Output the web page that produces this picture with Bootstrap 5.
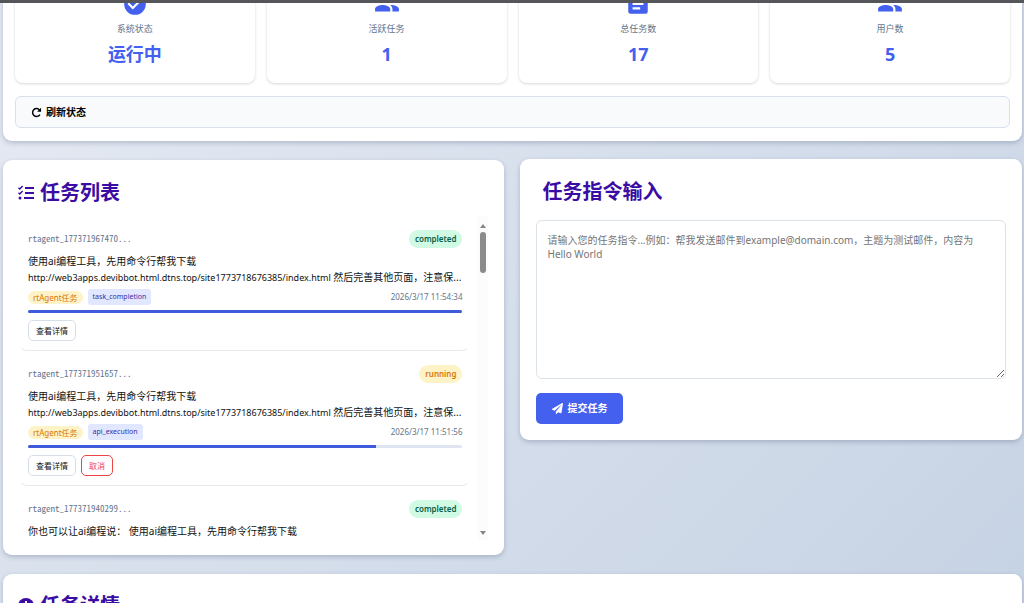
<!DOCTYPE html>
<html lang="zh-CN">
<head>
<meta charset="utf-8">
<meta name="viewport" content="width=device-width, initial-scale=1">
<title>任务控制台</title>
<link href="https://cdn.jsdelivr.net/npm/bootstrap@5.3.0/dist/css/bootstrap.min.css" rel="stylesheet">
<style>
:root{--primary:#4361ee;--heading:#3a0ca3;--muted:#64748b}
body{font-family:"Noto Sans","Noto Sans CJK SC",sans-serif;font-size:10px;line-height:16px;color:#111;height:100vh;overflow:hidden;background:linear-gradient(135deg,#e6eaf3,#c6d3e4)}
.window-edge{height:3px;background:#555659;z-index:5}
.page-body{padding:0 2px 0 3px}
.panel{background:#fff;border-radius:9px;box-shadow:0 2px 5px rgba(60,75,110,.28)}
.status-panel{margin-top:-36px;padding:12px 12px 13px;margin-bottom:19px}
.stat-row{gap:12px}
.stat-box{border-radius:8px;box-shadow:0 1px 3px rgba(0,0,0,.16);padding:12px 12px 16px}
.stat-box svg{width:26px;height:26px;fill:var(--primary)}
.stat-name{font-size:9px;line-height:14px;color:var(--muted);margin-top:5px}
.stat-num{font-size:18px;line-height:24px;font-weight:700;color:var(--primary);margin:6px 0 1px}
.btn{--bs-btn-border-radius:5px}
.btn-refresh{--bs-btn-border-radius:6px;background:#f8fafc;border:1px solid #d8e0ea;font-size:10px;line-height:16px;font-weight:700;padding:7px 15px;margin-top:13px;color:#000}
h2{font-size:20px;line-height:28px;font-weight:700;color:var(--heading);margin:0}
.heading-row{gap:6px}
.task-panel{padding:19px 16px 15px 15px;min-width:0}
.input-panel{min-width:0}
.task-scroller{height:324px;overflow:hidden;padding:0 8px 0 1px;min-width:0}
.task-lists{margin-top:9px}
.task-row{height:135px;padding:14px 7px 9px 8px;border:1px solid transparent;border-bottom-color:#e8e9ec;border-radius:8px;border-top:0}
.task-id{font-family:"Noto Sans Mono CJK SC","Liberation Mono",monospace;font-size:9px;color:var(--muted)}
.state{font-size:8px;line-height:14px;font-weight:600;padding:2px 6px;border-radius:9px}
.state-done{background:#d1fae5;color:#065f46}
.state-run{background:#fef3c7;color:#d97706}
.task-text{margin:5px 0 4px;height:32px;white-space:nowrap}
.task-url{font-size:9px}
.tag-agent,.tag-kind{padding:0 5px}
.tag-agent{font-size:8px;line-height:13px;border-radius:7px;background:#fef3c7;color:#d97706}
.tag-kind{font-size:7px;line-height:16px;border-radius:3px;background:#e0e7ff;color:#3730a3}
.tag-group,.btn-set{gap:5px}
.task-time{font-size:8px;color:var(--muted)}
.progress{height:3px;border-radius:2px;background:#dfe6f2;margin:5px 0 7px}
.progress-bar{background:#3f5bdc}
.btn-row{font-size:8px;line-height:15px;padding:2px 7px;background:#fff;border:1px solid #d8dee8;color:#111}
.btn-cancel{border-color:#ef4444;color:#ef4444}
.scroll-rail{width:10px;background:#fcfcfc;padding:8px 0 5px;height:324px}
.scroll-thumb{width:6px;height:41px;border-radius:3px;background:#8b8b8b;margin-top:4px}
.input-panel{padding:19px 16px 16px;margin-top:-1px}
.input-panel h2{padding-left:6px}
.cmd-box{height:159px;font-size:10px;line-height:14px;padding:12px 10px;margin-top:14px;border:1px solid #dbe2e8;border-radius:6px;resize:vertical}
.cmd-box::placeholder{color:#757575;opacity:1}
.btn-submit{background:var(--primary);color:#fff;font-size:10px;line-height:17px;font-weight:700;padding:6px 15px;margin-top:14px}
.detail-panel{margin-top:19px;padding:18px 15px}
</style>
</head>
<body>
<div class="window-edge position-relative"></div>
<main class="page-body">
  <section class="panel status-panel">
    <div class="d-flex stat-row">
      <div class="stat-box flex-fill w-100 text-center">
        <svg class="d-block mx-auto" viewBox="0 0 24 24"><path d="M12 2a10 10 0 1 0 0 20 10 10 0 0 0 0-20zm-2 15-5-5 1.400-1.400 3.600 3.600 7.600-7.600L19 8z"/></svg>
        <div class="stat-name">系统状态</div><div class="stat-num">运行中</div>
      </div>
      <div class="stat-box flex-fill w-100 text-center">
        <svg class="d-block mx-auto" viewBox="0 0 24 24"><path d="M16 11a3 3 0 1 0 0-6 3 3 0 0 0 0 6zm-8 0a3 3 0 1 0 0-6 3 3 0 0 0 0 6zm0 2c-2.300 0-7 1.200-7 3.500V19h14v-2.500C15 14.200 10.300 13 8 13zm8 0-1 .1c1.200.8 2 2 2 3.400V19h6v-2.500c0-2.300-4.700-3.500-7-3.500z"/></svg>
        <div class="stat-name">活跃任务</div><div class="stat-num">1</div>
      </div>
      <div class="stat-box flex-fill w-100 text-center">
        <svg class="d-block mx-auto" viewBox="0 0 24 24"><path d="M19 3H5a2 2 0 0 0-2 2v14c0 1.100.9 2 2 2h14a2 2 0 0 0 2-2V5a2 2 0 0 0-2-2zm-5 14H7v-2h7zm3-4H7v-2h10zm0-4H7V7h10z"/></svg>
        <div class="stat-name">总任务数</div><div class="stat-num">17</div>
      </div>
      <div class="stat-box flex-fill w-100 text-center">
        <svg class="d-block mx-auto" viewBox="0 0 24 24"><path d="M16 11a3 3 0 1 0 0-6 3 3 0 0 0 0 6zm-8 0a3 3 0 1 0 0-6 3 3 0 0 0 0 6zm0 2c-2.300 0-7 1.200-7 3.500V19h14v-2.500C15 14.200 10.300 13 8 13zm8 0-1 .1c1.200.8 2 2 2 3.400V19h6v-2.500c0-2.300-4.700-3.500-7-3.500z"/></svg>
        <div class="stat-name">用户数</div><div class="stat-num">5</div>
      </div>
    </div>
    <button type="button" class="btn btn-refresh w-100 d-flex align-items-center gap-1">
      <svg width="11" height="11" viewBox="0 0 12 12" fill="none" stroke="#000" stroke-width="1.600"><path d="M9.700 8.300A4.300 4.300 0 1 1 9.300 3.200"/><path d="M11 .8v4.400H6.600z" fill="#000" stroke="none"/></svg>
      <span>刷新状态</span>
    </button>
  </section>

  <div class="d-flex align-items-start gap-3">
    <section class="panel task-panel w-50">
      <h2 class="d-flex align-items-center heading-row">
        <svg width="16" height="16" viewBox="0 0 16 16" fill="none" stroke="#3a0ca3" stroke-width="1.800"><path d="M7 3h9M7 8h9M6 13h10"/><path d="M.5 2.700 1.800 4 4.600 1M.5 7.700 1.800 9l2.800-3" stroke-width="1.400"/><circle cx="2" cy="13" r="1.500" fill="#3a0ca3" stroke="none"/></svg>
        <span>任务列表</span>
      </h2>
      <div class="d-flex task-lists">
        <div class="task-scroller flex-grow-1">
          <article class="task-row">
            <div class="d-flex justify-content-between align-items-center"><span class="task-id">rtagent_177371967470...</span><span class="state state-done">completed</span></div>
            <p class="task-text">使用ai编程工具，先用命令行帮我下载<br><span class="task-url">http://web3apps.devibbot.html.dtns.top/site1773718676385/index.html</span> 然后完善其他页面，注意保...</p>
            <div class="d-flex align-items-center tag-group"><span class="tag-agent">rtAgent任务</span><span class="tag-kind">task_completion</span><time class="task-time ms-auto">2026/3/17 11:54:34</time></div>
            <div class="progress"><div class="progress-bar" style="width:100%"></div></div>
            <div class="d-flex btn-set"><button type="button" class="btn btn-row">查看详情</button></div>
          </article>
          <article class="task-row">
            <div class="d-flex justify-content-between align-items-center"><span class="task-id">rtagent_177371951657...</span><span class="state state-run">running</span></div>
            <p class="task-text">使用ai编程工具，先用命令行帮我下载<br><span class="task-url">http://web3apps.devibbot.html.dtns.top/site1773718676385/index.html</span> 然后完善其他页面，注意保...</p>
            <div class="d-flex align-items-center tag-group"><span class="tag-agent">rtAgent任务</span><span class="tag-kind">api_execution</span><time class="task-time ms-auto">2026/3/17 11:51:56</time></div>
            <div class="progress"><div class="progress-bar" style="width:80%"></div></div>
            <div class="d-flex btn-set"><button type="button" class="btn btn-row">查看详情</button><button type="button" class="btn btn-row btn-cancel">取消</button></div>
          </article>
          <article class="task-row">
            <div class="d-flex justify-content-between align-items-center"><span class="task-id">rtagent_177371940299...</span><span class="state state-done">completed</span></div>
            <p class="task-text">你也可以让ai编程说： 使用ai编程工具，先用命令行帮我下载</p>
          </article>
        </div>
        <div class="scroll-rail d-flex flex-column align-items-center" aria-hidden="true">
          <svg width="6" height="4" viewBox="0 0 6 4"><path d="M3 0l3 4H0z" fill="#858585"/></svg>
          <div class="scroll-thumb"></div>
          <svg class="mt-auto" width="6" height="4" viewBox="0 0 6 4"><path d="M0 0h6L3 4z" fill="#858585"/></svg>
        </div>
      </div>
    </section>

    <section class="panel input-panel w-50">
      <h2><label for="cmd">任务指令输入</label></h2>
      <textarea id="cmd" class="form-control cmd-box" placeholder="请输入您的任务指令...例如：帮我发送邮件到example@domain.com，主题为测试邮件，内容为Hello World"></textarea>
      <button type="button" class="btn btn-submit d-flex align-items-center gap-1">
        <svg width="11" height="11" viewBox="0 0 512 512" fill="#fff"><path d="M476 3 12 271c-18 10-16 35 2 43l107 45L409 105c5-5 13 2 8 8L176 407v80c0 24 28 33 42 16l64-78 125 53c14 6 31-3 33-18l72-432c4-20-18-35-36-25z"/></svg>
        <span>提交任务</span>
      </button>
    </section>
  </div>

  <section class="panel detail-panel">
    <h2 class="d-flex align-items-center heading-row">
      <svg width="16" height="16" viewBox="0 0 16 16"><circle cx="8" cy="8" r="8" fill="#3a0ca3"/><path d="M7 3h2v2H7zM7 7h2v6H7z" fill="#fff"/></svg>
      <span>任务详情</span>
    </h2>
  </section>
</main>
<script src="https://cdn.jsdelivr.net/npm/bootstrap@5.3.0/dist/js/bootstrap.bundle.min.js"></script>
</body>
</html>
